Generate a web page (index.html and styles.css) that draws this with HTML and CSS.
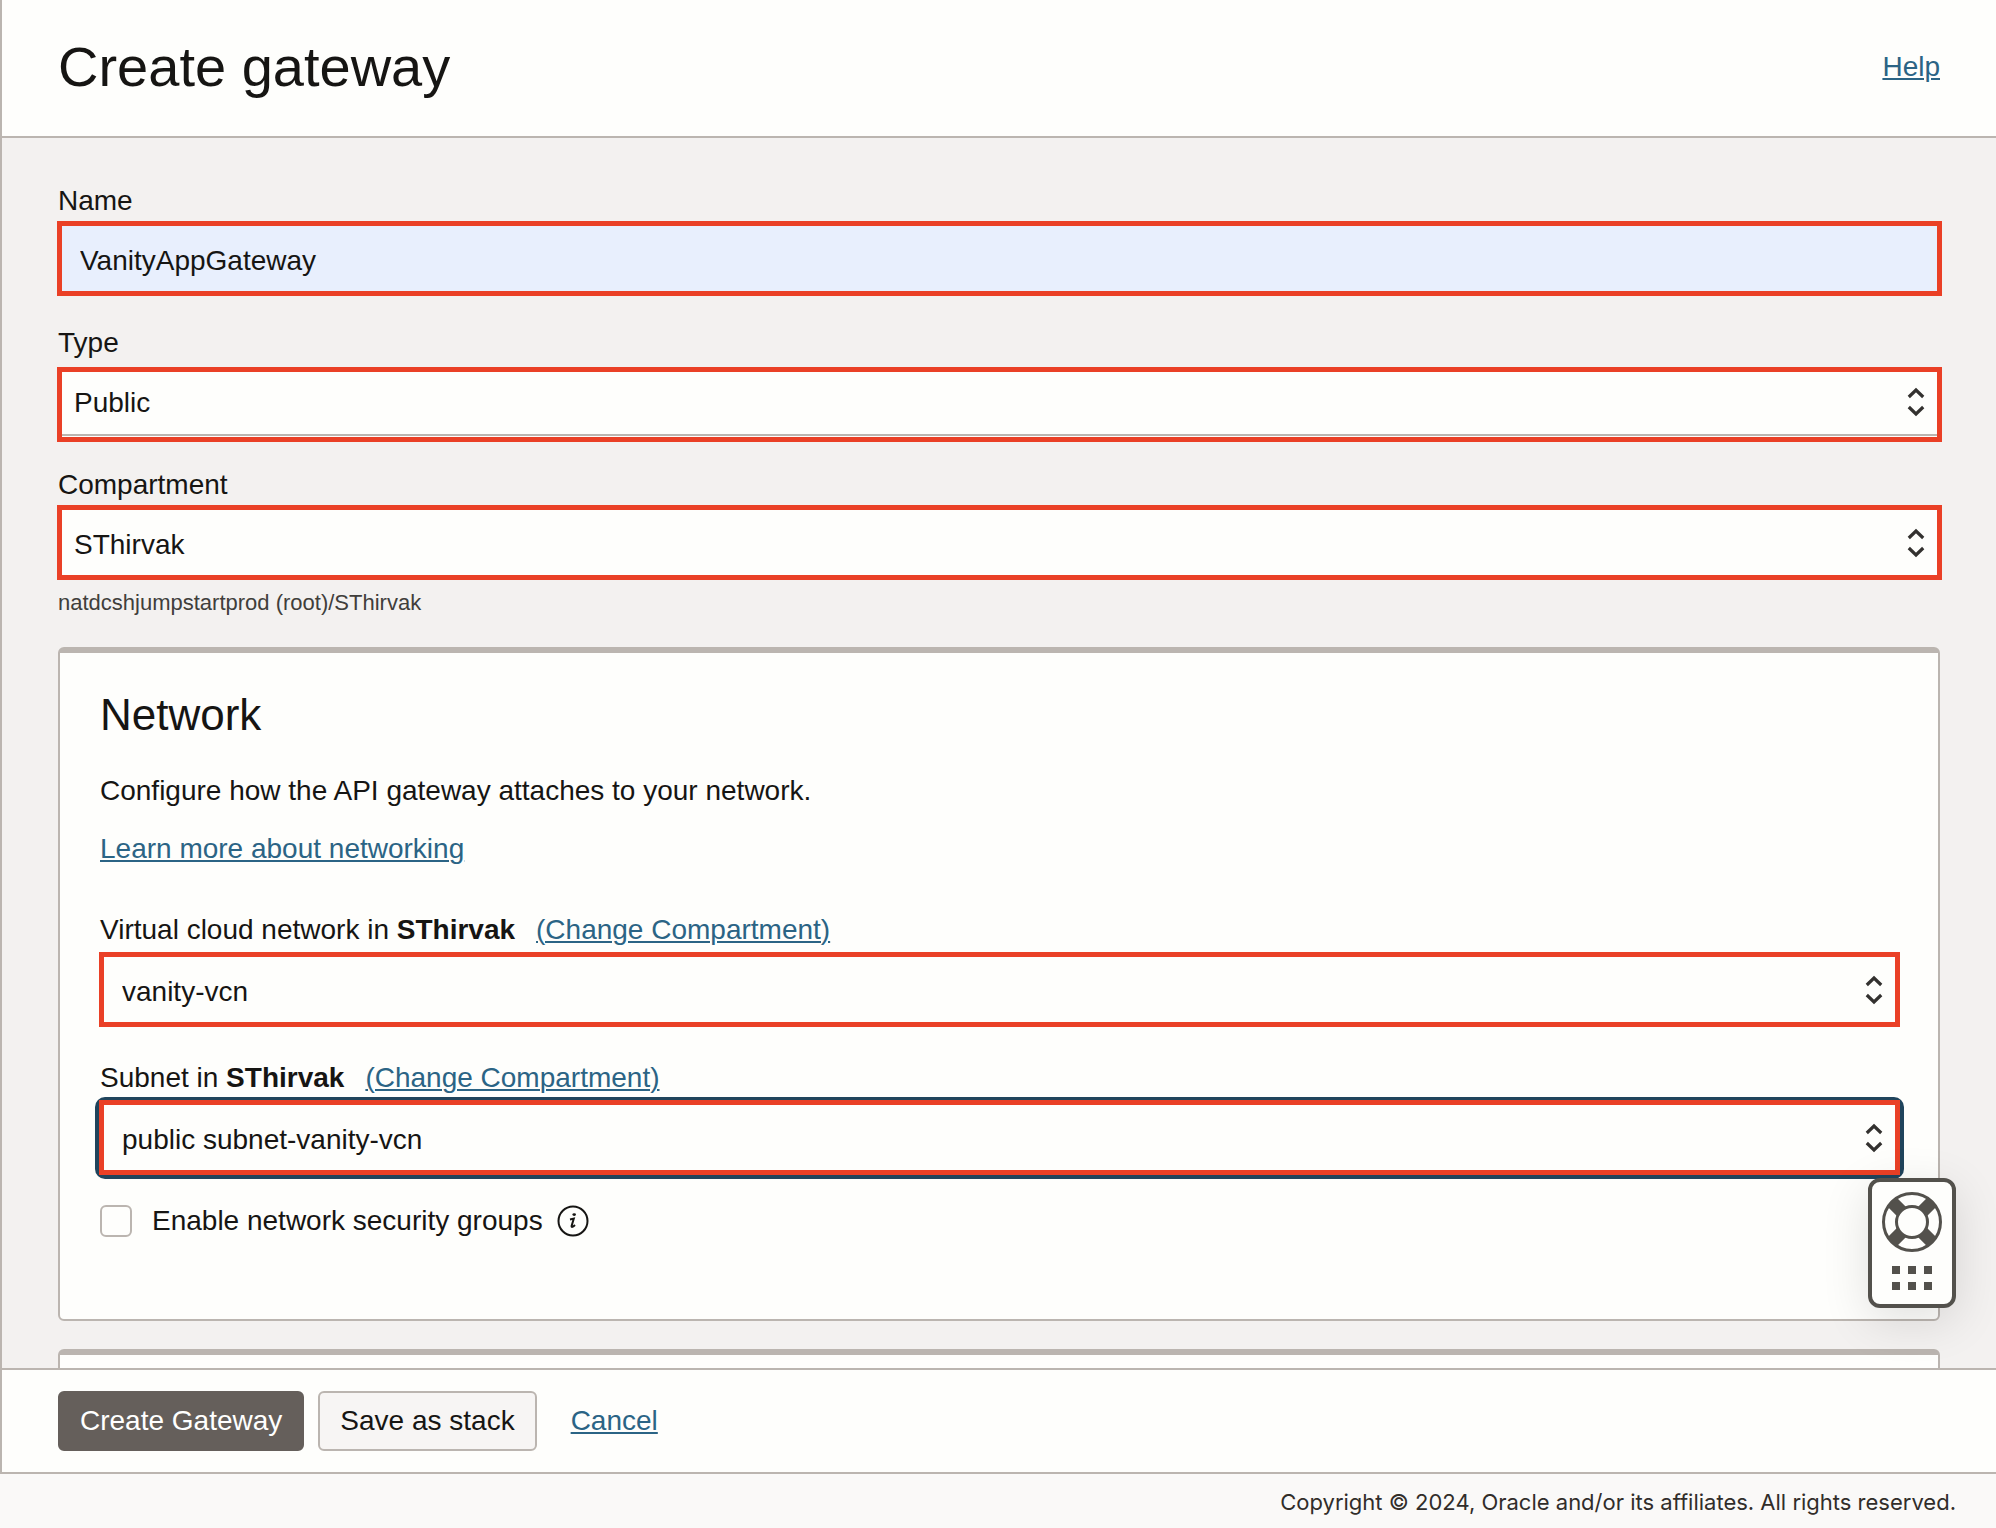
FILE: index.html
```html
<!DOCTYPE html>
<html lang="en">
<head>
<meta charset="utf-8">
<title>Create gateway</title>
<link rel="stylesheet" href="styles.css">
</head>
<body>
<svg class="sprite" aria-hidden="true">
  <symbol id="updown" viewBox="0 0 20 32">
    <path d="M2.800 11 L10 4 L17.200 11 M2.800 21 L10 28 L17.200 21" fill="none" stroke="#33312f" stroke-width="3.200"/>
  </symbol>
</svg>

<main class="panel">
  <header class="panel-header">
    <h1>Create gateway</h1>
    <a href="#help">Help</a>
  </header>

  <form class="form" id="gateway-form">
    <div class="field">
      <label for="name">Name</label>
      <div class="control control-autofill">
        <input id="name" type="text" value="VanityAppGateway">
      </div>
    </div>

    <div class="field field-plain">
      <label for="type">Type</label>
      <div class="control control-plain">
        <select id="type"><option>Public</option></select>
        <svg class="arrows" aria-hidden="true"><use href="#updown"/></svg>
      </div>
    </div>

    <div class="field">
      <label for="compartment">Compartment</label>
      <div class="control control-tight">
        <select id="compartment"><option>SThirvak</option></select>
        <svg class="arrows" aria-hidden="true"><use href="#updown"/></svg>
      </div>
      <p class="hint">natdcshjumpstartprod (root)/SThirvak</p>
    </div>

    <section class="card">
      <h2>Network</h2>
      <p class="intro">Configure how the API gateway attaches to your network.</p>
      <p class="more"><a href="#networking">Learn more about networking</a></p>

      <div class="field">
        <div class="label-row">
          <label for="vcn">Virtual cloud network in <b>SThirvak</b></label>
          <a href="#vcn-compartment">(Change Compartment)</a>
        </div>
        <div class="control">
          <select id="vcn"><option>vanity-vcn</option></select>
          <svg class="arrows" aria-hidden="true"><use href="#updown"/></svg>
        </div>
      </div>

      <div class="field">
        <div class="label-row">
          <label for="subnet">Subnet in <b>SThirvak</b></label>
          <a href="#subnet-compartment">(Change Compartment)</a>
        </div>
        <div class="control control-focused">
          <select id="subnet"><option>public subnet-vanity-vcn</option></select>
          <svg class="arrows" aria-hidden="true"><use href="#updown"/></svg>
        </div>
      </div>

      <div class="check">
        <input id="nsg" type="checkbox">
        <label for="nsg">Enable network security groups</label>
        <svg class="info" viewBox="0 0 32 32" role="img" aria-label="Information">
          <circle cx="16" cy="16" r="14.500" fill="none" stroke="currentColor" stroke-width="2"/>
          <ellipse cx="17.200" cy="9.600" rx="1.800" ry="1.400" fill="currentColor"/>
          <path d="M13 14.400 L16.800 13.600 L14.600 21 Q14.400 23.200 18 20" fill="none" stroke="currentColor" stroke-width="2"/>
        </svg>
      </div>
    </section>

    <section class="card"></section>
  </form>

  <div class="actions">
    <button class="button button-primary" type="submit" form="gateway-form">Create Gateway</button>
    <button class="button" type="button">Save as stack</button>
    <a class="cancel" href="#cancel">Cancel</a>
  </div>
</main>

<footer class="legal">Copyright © 2024, Oracle and/or its affiliates. All rights reserved.</footer>

<button class="support" type="button" aria-label="Support">
  <svg viewBox="0 0 80 122" aria-hidden="true">
    <g fill="none" stroke="currentColor">
      <path d="M20 20 L60 60 M60 20 L20 60" stroke-width="13"/>
      <circle cx="40" cy="40" r="15.500" fill="#fefefc" stroke-width="3"/>
      <circle cx="40" cy="40" r="28.500" stroke-width="3"/>
    </g>
    <path fill="currentColor" d="M20 84h8v8h-8z M36 84h8v8h-8z M52 84h8v8h-8z M20 100h8v8h-8z M36 100h8v8h-8z M52 100h8v8h-8z"/>
  </svg>
</button>
</body>
</html>
```
FILE: styles.css
```css
:root {
  --ink: #161513;
  --line: #bbb5b0;
  --surface: #fefefc;
  --link: #2b6485;
  --mark: #ea4026;
}

* {
  box-sizing: border-box;
}

body {
  display: flex;
  flex-direction: column;
  height: 100vh;
  margin: 0;
  background: #faf9f8;
  color: var(--ink);
  font: 28px/32px "Liberation Sans", Arial, sans-serif;
}

h1, h2, p {
  margin: 0;
  font-weight: 400;
}

a {
  color: var(--link);
  text-decoration-thickness: 2px;
  text-underline-offset: 2px;
}

label {
  display: block;
}

.sprite {
  position: absolute;
  width: 0;
  height: 0;
}

.panel {
  display: flex;
  flex: 1;
  flex-direction: column;
  min-height: 0;
  border-left: 2px solid var(--line);
  border-bottom: 2px solid var(--line);
  background: #f3f1f0;
}

.panel-header {
  display: flex;
  align-items: center;
  justify-content: space-between;
  padding: 35px 56px 37px;
  border-bottom: 2px solid var(--line);
  background: var(--surface);
}

h1 {
  font-size: 56px;
  line-height: 64px;
}

.form {
  flex: 1;
  min-height: 0;
  padding: 47px 56px 0;
  overflow: hidden;
}

.field {
  display: grid;
  gap: 4px;
  margin-bottom: 31px;
}

.field-plain {
  gap: 8px;
  margin-bottom: 27px;
}

.control {
  display: grid;
  grid-template-columns: 1fr auto;
  align-items: center;
  height: 75px;
  margin: 0 -2px 0 -1px;
  border: 5px solid var(--mark);
  background: var(--surface);
}

.control input,
.control select {
  grid-area: 1 / 1 / 2 / 3;
  width: 100%;
  height: 100%;
  padding: 4px 18px 0;
  border: 0;
  outline: 0;
  background: transparent;
  color: inherit;
  font: inherit;
  appearance: none;
}

.control-autofill {
  background: #e8effd;
}

.control-plain {
  padding-bottom: 1px;
}

.control-plain select {
  padding: 0 12px;
  border-bottom: 2px solid var(--line);
}

.control-tight select {
  padding-left: 12px;
}

/* Focus ring, drawn behind the box so that its outer corners are round */
.control-focused {
  position: relative;
}

.control-focused::before {
  content: "";
  position: absolute;
  inset: -8px -9px -9px;
  z-index: -1;
  border-radius: 10px;
  background: #20445c;
}

.arrows {
  grid-area: 1 / 2;
  width: 20px;
  height: 32px;
  margin-right: 11px;
  pointer-events: none;
}

.control-plain .arrows {
  margin-bottom: 4px;
}

.hint {
  padding-top: 7px;
  color: #403e3b;
  font-size: 22px;
  line-height: 24px;
}

.card {
  isolation: isolate;
  min-height: 200px;
  margin: 32px 0 28px;
  padding: 36px 40px 82px;
  border: 2px solid var(--line);
  border-top-width: 6px;
  border-radius: 6px;
  background: var(--surface);
}

.card + .card {
  margin-top: 28px;
}

h2 {
  font-size: 44px;
  line-height: 52px;
}

.intro {
  margin-top: 34px;
}

.more {
  margin: 26px 0 49px;
}

.card .field {
  gap: 6px;
  margin-bottom: 35px;
}

.label-row {
  display: flex;
  gap: 21px;
}

.card .check {
  display: flex;
  align-items: center;
  margin-top: -5px;
}

.check input {
  width: 32px;
  height: 32px;
  margin: 0 20px 0 0;
  border: 2px solid var(--line);
  border-radius: 6px;
  background: var(--surface);
  appearance: none;
}

.info {
  width: 32px;
  height: 32px;
  margin-left: 14px;
}

.actions {
  display: flex;
  align-items: center;
  gap: 14px;
  padding: 21px 56px;
  border-top: 2px solid var(--line);
  background: var(--surface);
}

.button {
  height: 60px;
  padding: 0 20px;
  border: 2px solid var(--line);
  border-radius: 6px;
  background: #f7f5f4;
  color: var(--ink);
  font: inherit;
}

.button-primary {
  border-color: #655f5b;
  background: #655f5b;
  color: #fff;
}

.cancel {
  margin-left: 20px;
}

.legal {
  padding: 16px 40px 14px;
  color: #312d2a;
  font: 22px/24px Inter, sans-serif;
  text-align: right;
}

.support {
  position: fixed;
  right: 40px;
  bottom: 220px;
  width: 88px;
  height: 130px;
  padding: 0;
  border: 4px solid #53514c;
  border-radius: 12px;
  background: var(--surface);
  box-shadow: 0 12px 48px rgba(0, 0, 0, 0.12);
  color: #53514c;
}

.support svg {
  display: block;
  width: 80px;
  height: 122px;
}
```
